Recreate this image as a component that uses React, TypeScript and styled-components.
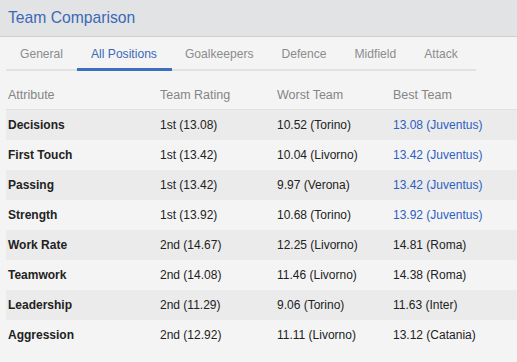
import React from "react";
import styled, { createGlobalStyle } from "styled-components";

const Global = createGlobalStyle`
  html, body { margin: 0; padding: 0; }
  body { background: #f4f4f4; font-family: "Liberation Sans", Arial, sans-serif; }
`;

const Page = styled.div`
  width: 517px;
  height: 362px;
  background: #f4f4f4;
  overflow: hidden;
`;

const Header = styled.div`
  height: 37px;
  background: #e2e3e5;
  border-bottom: 1px solid #cfd0d2;
  display: flex;
  align-items: center;
  padding-left: 8px;
  box-sizing: border-box;
`;

const Title = styled.h1`
  margin: -1px 0 0 0;
  font-size: 15.7px;
  font-weight: normal;
  color: #3b69b5;
`;

const Tabs = styled.div`
  display: flex;
  margin: 0 0 0 6px;
  width: 470px;
  height: 32px;
  border-bottom: 2px solid #e1e1e1;
`;

const Tab = styled.div<{ $active?: boolean }>`
  padding: 2px 14px 0 14px;
  display: flex;
  align-items: center;
  font-size: 12.1px;
  color: ${(p) => (p.$active ? "#3b69b5" : "#8c8c8c")};
  position: relative;
  &::after {
    content: "";
    display: ${(p) => (p.$active ? "block" : "none")};
    position: absolute;
    left: 0;
    right: -1px;
    bottom: -2px;
    height: 3px;
    background: #3b6fbf;
  }
`;

const Table = styled.div`
  margin: 9px 0 0 6px;
  display: grid;
  grid-template-columns: 152px 117px 116px 1fr;
`;

const HeadCell = styled.div`
  height: 29px;
  display: flex;
  align-items: center;
  padding-left: 2px;
  font-size: 12.5px;
  color: #858585;
  border-bottom: 1px solid #e2e2e2;
`;

const Cell = styled.div<{ $shaded: boolean; $bold?: boolean; $link?: boolean }>`
  height: 30px;
  display: flex;
  align-items: center;
  padding-left: 2px;
  font-size: 12px;
  background: ${(p) => (p.$shaded ? "#ebebeb" : "transparent")};
  font-weight: ${(p) => (p.$bold ? "bold" : "normal")};
  color: ${(p) => (p.$link ? "#2d5fc0" : "#222")};
`;

const tabs = ["General", "All Positions", "Goalkeepers", "Defence", "Midfield", "Attack"];

const rows: [string, string, string, string, boolean][] = [
  ["Decisions", "1st (13.08)", "10.52 (Torino)", "13.08 (Juventus)", true],
  ["First Touch", "1st (13.42)", "10.04 (Livorno)", "13.42 (Juventus)", true],
  ["Passing", "1st (13.42)", "9.97 (Verona)", "13.42 (Juventus)", true],
  ["Strength", "1st (13.92)", "10.68 (Torino)", "13.92 (Juventus)", true],
  ["Work Rate", "2nd (14.67)", "12.25 (Livorno)", "14.81 (Roma)", false],
  ["Teamwork", "2nd (14.08)", "11.46 (Livorno)", "14.38 (Roma)", false],
  ["Leadership", "2nd (11.29)", "9.06 (Torino)", "11.63 (Inter)", false],
  ["Aggression", "2nd (12.92)", "11.11 (Livorno)", "13.12 (Catania)", false],
];

export default function App() {
  return (
    <Page>
      <Global />
      <Header>
        <Title>Team Comparison</Title>
      </Header>
      <Tabs>
        {tabs.map((t) => (
          <Tab key={t} $active={t === "All Positions"}>
            {t}
          </Tab>
        ))}
      </Tabs>
      <Table>
        <HeadCell>Attribute</HeadCell>
        <HeadCell>Team Rating</HeadCell>
        <HeadCell>Worst Team</HeadCell>
        <HeadCell>Best Team</HeadCell>
        {rows.map(([a, r, w, b, link], i) => {
          const shaded = i % 2 === 0;
          return (
            <React.Fragment key={a}>
              <Cell $shaded={shaded} $bold>{a}</Cell>
              <Cell $shaded={shaded}>{r}</Cell>
              <Cell $shaded={shaded}>{w}</Cell>
              <Cell $shaded={shaded} $link={link}>{b}</Cell>
            </React.Fragment>
          );
        })}
      </Table>
    </Page>
  );
}
